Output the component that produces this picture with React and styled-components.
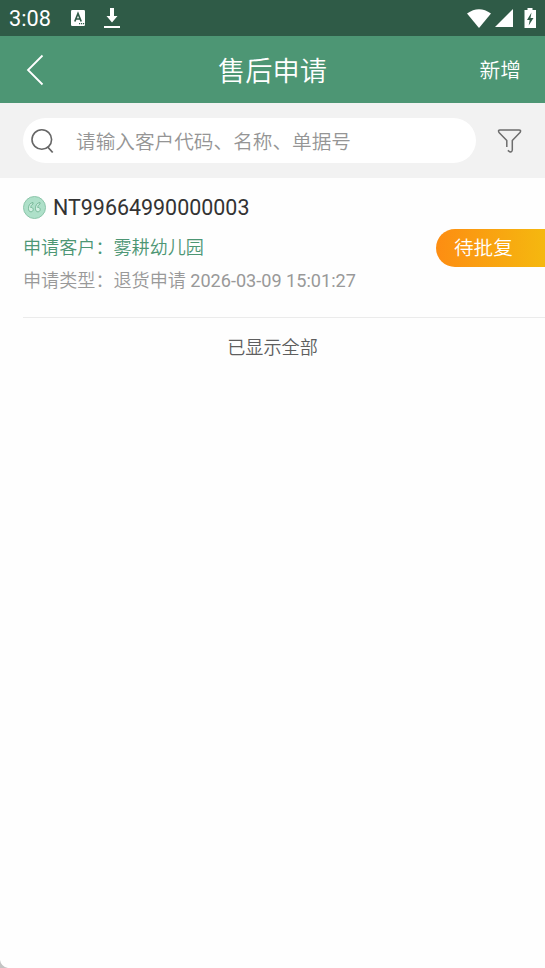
import React from "react";
import styled, { createGlobalStyle } from "styled-components";

const GlobalStyle = createGlobalStyle`
  * {
    box-sizing: border-box;
  }
  body {
    margin: 0;
    background: #fefefe;
    font-family: Roboto, "Noto Sans CJK SC", sans-serif;
    font-weight: 400;
  }
  svg {
    display: block;
    flex: none;
  }
`;

const Screen = styled.div`
  position: relative;
  width: 545px;
  height: 968px;
  overflow: hidden;
  background: #fefefe;
`;

const StatusBar = styled.div`
  display: flex;
  align-items: center;
  height: 36px;
  padding: 0 9px;
  background: #2f5b47;
  color: #fff;
`;

const Clock = styled.span`
  width: 61px;
  font-size: 21.7px;
  line-height: 36px;
  padding-top: 2px;
`;

const StatusIcons = styled.div`
  display: flex;
  align-items: center;
  gap: ${(props) => props.$gap};
  margin-left: ${(props) => (props.$right ? "auto" : "0")};
`;

const NavBar = styled.header`
  display: grid;
  grid-template-columns: 1fr auto 1fr;
  align-items: center;
  height: 67px;
  padding: 0 24px;
  background: #4d9674;
  color: #fff;
`;

const NavButton = styled.button`
  justify-self: ${(props) => props.$side};
  padding: 0;
  border: none;
  background: none;
  color: inherit;
  font: inherit;
  font-size: 20.7px;
  font-weight: 350;
  line-height: 30px;
`;

const ButtonLabel = styled.span`
  display: block;
  padding-top: 2px;
`;

const Title = styled.h1`
  margin: 0;
  padding-top: 4px;
  font-size: 27.2px;
  font-weight: 350;
  line-height: 40px;
`;

const SearchRow = styled.div`
  display: flex;
  align-items: center;
  height: 75px;
  padding: 0 21px 0 23px;
  background: #f2f2f2;
`;

const SearchBox = styled.div`
  display: flex;
  align-items: center;
  gap: 21px;
  width: 452.5px;
  height: 45px;
  margin-right: 21.5px;
  padding-left: 8px;
  border-radius: 23px;
  background: #fff;
`;

const Placeholder = styled.span`
  padding-top: 4px;
  color: #959595;
  font-size: 19.65px;
  font-weight: 350;
  line-height: 28px;
`;

const Record = styled.section`
  display: flex;
  height: 140px;
  margin-left: 23px;
  border-bottom: 1px solid #ebebeb;
`;

const RecordBody = styled.div`
  flex: 1;
  padding-top: 14px;
`;

const NumberLine = styled.div`
  display: flex;
  align-items: center;
  gap: 7px;
  height: 30px;
  color: #333;
  font-size: 21.45px;
`;

const InfoLine = styled.div`
  height: 33px;
  color: ${(props) => props.$color};
  font-size: 18.1px;
  font-weight: 350;
  line-height: 33px;
  white-space: nowrap;
`;

const Customer = styled(InfoLine)`
  margin-top: 9px;
`;

const DateText = styled.span`
  font-weight: 400;
`;

const StatusTag = styled.div`
  width: 109px;
  height: 38px;
  margin-top: 51px;
  padding-left: 18px;
  border-radius: 19px 0 0 19px;
  background: linear-gradient(90deg, #fd8d12, #f5b80f);
  color: #fff;
  font-size: 19.6px;
  font-weight: 350;
  line-height: 39px;
`;

const ListEnd = styled.p`
  margin: 0;
  padding-top: 14px;
  color: #5e5e5e;
  font-size: 18.1px;
  font-weight: 350;
  line-height: 32px;
  text-align: center;
`;

const Corner = styled.svg`
  position: absolute;
  left: 0;
  bottom: 0;
`;

const App = () => {
  return (
    <Screen>
      <GlobalStyle />
      <StatusBar>
        <Clock>3:08</Clock>
        <StatusIcons $gap="18px">
          <svg width="16" height="16" viewBox="0 0 16 16">
            <rect x="1" width="14" height="16" rx="1.2" fill="#fff" />
            <path d="M4.8 11.500 8 3.500l3.200 8M6 9h4" fill="none" stroke="#2f5b47" strokeWidth="1.7" />
            <path d="M9 13h1.200v1.200H9zM11 13h1.200v1.200H11zM13 13h1.200v1.200H13z" fill="#2f5b47" />
          </svg>
          <svg width="16" height="20" viewBox="0 0 16 20">
            <path d="M6 0h4v8h3.500L8 14.500 2.500 8H6zM0 18h16v2H0z" fill="#fff" />
          </svg>
        </StatusIcons>
        <StatusIcons $gap="4px" $right>
          <svg width="24" height="19" viewBox="0 0 24 19">
            <path d="M0 4.500Q12-4 24 4.500L12 19z" fill="#fff" />
          </svg>
          <svg width="18" height="18" viewBox="0 0 18 18">
            <path d="M18 0v18H0z" fill="#fff" />
          </svg>
          <svg width="19" height="20" viewBox="0 0 19 20">
            <path d="M10.500 0h5v2H19v18H7.500V2h3z" fill="#fff" />
            <path d="M14.500 4.500 10 12h2.700l-1 5.500L16.500 10h-3z" fill="#2f5b47" />
          </svg>
        </StatusIcons>
      </StatusBar>
      <NavBar>
        <NavButton $side="start" aria-label="返回">
          <svg width="22" height="32" viewBox="0 0 22 32">
            <path d="M18.500 1.500 4 16l14.500 14.500" fill="none" stroke="#fff" strokeWidth="1.8" />
          </svg>
        </NavButton>
        <Title>售后申请</Title>
        <NavButton $side="end">
          <ButtonLabel>新增</ButtonLabel>
        </NavButton>
      </NavBar>
      <SearchRow>
        <SearchBox>
          <svg width="24" height="26" viewBox="0 0 24 26" fill="none" stroke="#666" strokeWidth="1.6">
            <circle cx="10.800" cy="11.500" r="9.800" />
            <path d="m16.700 19 5 5.500" strokeWidth="1.8" />
          </svg>
          <Placeholder>请输入客户代码、名称、单据号</Placeholder>
        </SearchBox>
        <svg width="26" height="26" viewBox="0 0 26 26" fill="none" stroke="#6d6d6d" strokeWidth="1.500">
          <path
            d="M9.800 19v-6.500L2 4.500Q.7 2 3 2h19q2.500 0 1 2.500l-7.700 8V22q-.3 2.500-2.500 1.800l-2-1.500"
            strokeLinejoin="round"
          />
        </svg>
      </SearchRow>
      <Record>
        <RecordBody>
          <NumberLine>
            <svg width="23" height="23" viewBox="0 0 23 23">
              <circle cx="11.500" cy="11.500" r="11" fill="#aee0c9" stroke="#8cc5aa" />
              <g fill="#d3f1e3" stroke="#68ad8b" strokeWidth=".8">
                <path d="M10 6.500C7 7 5.500 9 5.500 12.500c0 2 .8 3.300 2.400 3.300 1.400 0 2.300-1 2.300-2.300s-1-2.200-2.500-2c.1-1.700.8-2.800 2.300-3.500z" />
                <path d="M17 6.500c-3 .5-4.500 2.500-4.500 6 0 2 .8 3.300 2.400 3.300 1.400 0 2.300-1 2.300-2.300s-1-2.200-2.500-2c.1-1.700.8-2.800 2.300-3.500z" />
              </g>
            </svg>
            <span>NT99664990000003</span>
          </NumberLine>
          <Customer $color="#4d9674">申请客户：雾耕幼儿园</Customer>
          <InfoLine $color="#999">
            申请类型：退货申请 <DateText>2026-03-09 15:01:27</DateText>
          </InfoLine>
        </RecordBody>
        <StatusTag>待批复</StatusTag>
      </Record>
      <ListEnd>已显示全部</ListEnd>
      <Corner width="8" height="8" viewBox="0 0 8 8">
        <path d="M0 0q1 6.500 8 8H0z" fill="#c4c4c4" />
      </Corner>
    </Screen>
  );
};

export default App;
